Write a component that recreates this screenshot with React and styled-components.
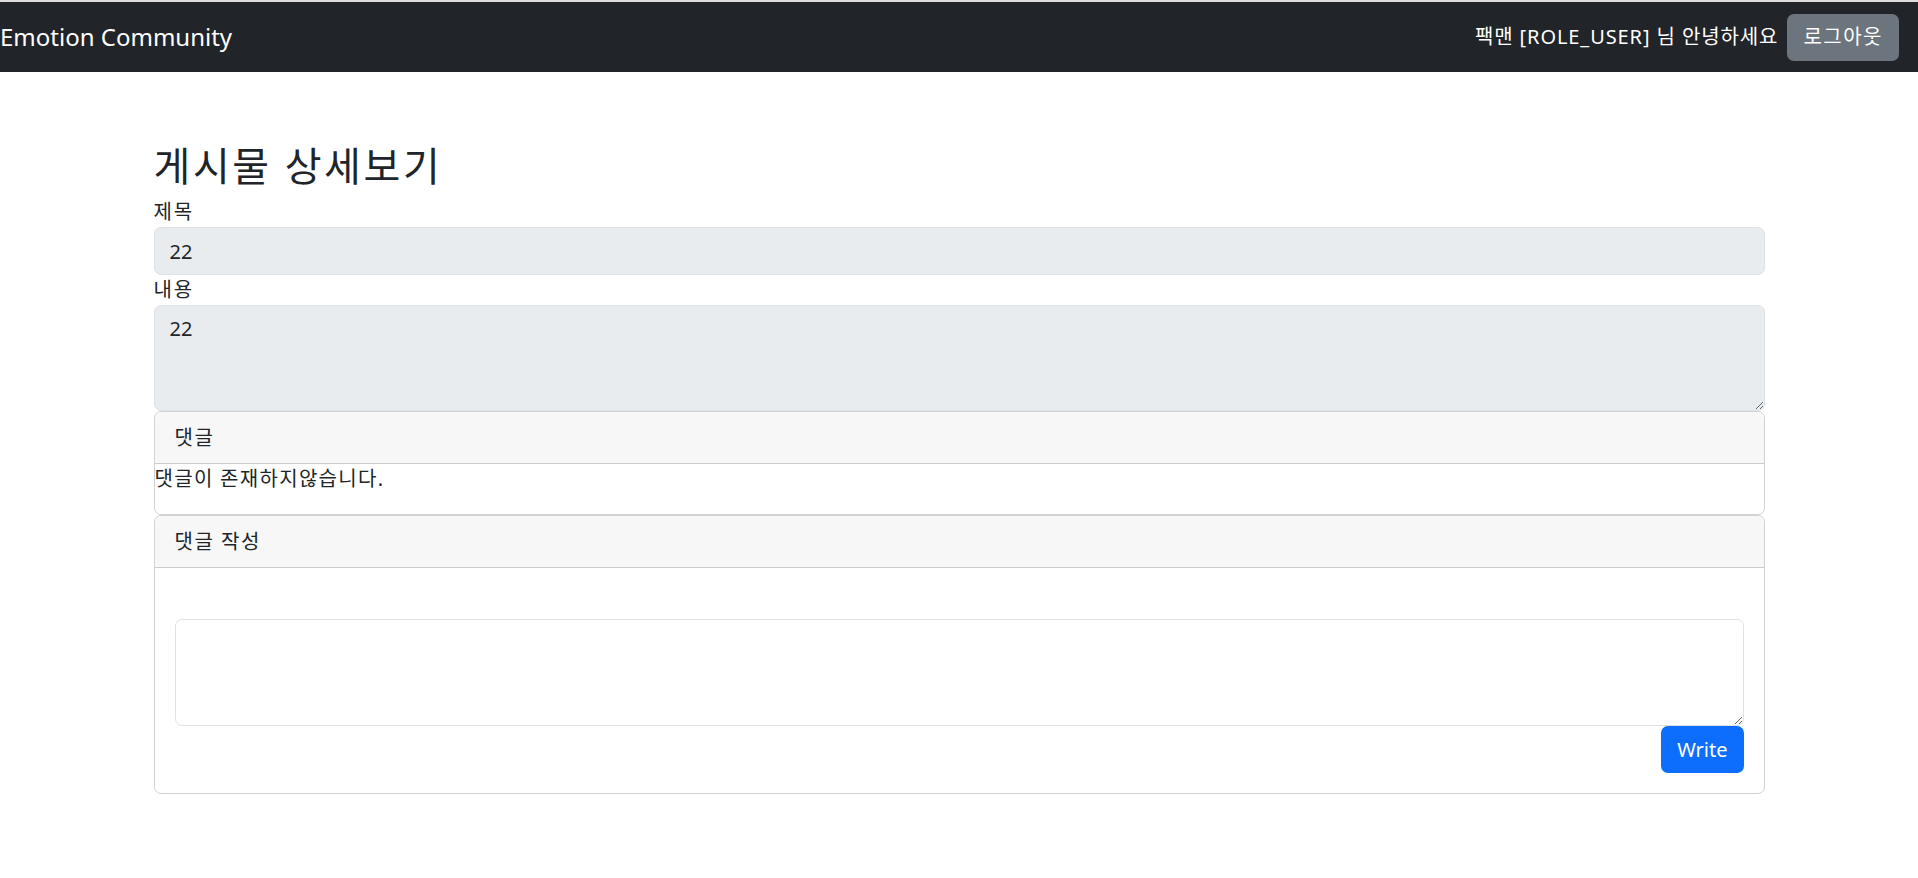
import React from "react";
import styled, { createGlobalStyle } from "styled-components";

const GlobalStyle = createGlobalStyle`
  body {
    margin: 0;
    border-top: 2px solid #dedede;
    font-family: "Noto Sans", "Noto Sans CJK KR", sans-serif;
    font-size: 20px;
    line-height: 1.5;
    color: #212529;
    background: #fff;
  }
  * {
    box-sizing: border-box;
  }
`;

const Navbar = styled.nav`
  height: 70px;
  background: #212529;
  display: flex;
  align-items: center;
  justify-content: space-between;
  padding-right: 19px;
`;

const Brand = styled.a`
  color: #fff;
  font-size: 24px;
  line-height: 30px;
  text-decoration: none;
`;

const UserArea = styled.div`
  display: flex;
  align-items: center;
  gap: 9px;
  color: #fff;
`;

const Greeting = styled.span`
  letter-spacing: 0.9px;
`;

const Button = styled.button`
  font-family: inherit;
  font-size: 20px;
  line-height: 30px;
  height: 47px;
  padding: 7px 15px;
  border: 1px solid transparent;
  border-radius: 7px;
  color: #fff;
  letter-spacing: ${(p) => (p.$variant === "primary" ? "0" : "1.5px")};
  background: ${(p) => (p.$variant === "primary" ? "#0d6efd" : "#6c757d")};
  cursor: pointer;
`;

const Container = styled.main`
  width: 1611px;
  margin: 0 auto;
  padding-top: 70px;
`;

const Title = styled.h2`
  margin: 0 0 7px;
  font-size: 40px;
  font-weight: 400;
  line-height: 48px;
  letter-spacing: 2.6px;
`;

const Label = styled.label`
  display: block;
  line-height: 30px;
  letter-spacing: 1.8px;
`;

const fieldBase = `
  display: block;
  width: 100%;
  font-family: inherit;
  font-size: 20px;
  line-height: 30px;
  color: #212529;
  padding: 8px 15px;
  border: 1px solid #dee2e6;
  border-radius: 7px;
  outline: none;
`;

const Input = styled.input`
  ${fieldBase}
  height: 48px;
  background: #e9ecef;
`;

const TextArea = styled.textarea`
  ${fieldBase}
  height: ${(p) => p.$height}px;
  background: ${(p) => (p.$readOnly ? "#e9ecef" : "#fff")};
  resize: vertical;
`;

const Card = styled.section`
  border: 1px solid rgba(0, 0, 0, 0.175);
  border-radius: 7px;
  overflow: hidden;
`;

const CardHeader = styled.div`
  padding: 10px 20px;
  line-height: 31px;
  letter-spacing: 1.5px;
  background: #f7f7f7;
  border-bottom: 1px solid rgba(0, 0, 0, 0.175);
`;

const EmptyText = styled.p`
  margin: 0 0 20px;
  line-height: 30px;
  letter-spacing: 1.3px;
`;

const CardBody = styled.div`
  padding: 20px;
  display: flex;
  flex-direction: column;
`;

const Spacer = styled.div`
  height: 31px;
`;

const Actions = styled.div`
  display: flex;
  justify-content: flex-end;
`;

export default function App() {
  return (
    <>
      <GlobalStyle />
      <Navbar>
        <Brand href="#">Emotion Community</Brand>
        <UserArea>
          <Greeting>팩맨 [ROLE_USER] 님 안녕하세요</Greeting>
          <Button>로그아웃</Button>
        </UserArea>
      </Navbar>
      <Container>
        <Title>게시물 상세보기</Title>
        <Label>제목</Label>
        <Input value="22" readOnly />
        <Label>내용</Label>
        <TextArea $height={106} $readOnly value="22" readOnly />
        <Card>
          <CardHeader>댓글</CardHeader>
          <EmptyText>댓글이 존재하지않습니다.</EmptyText>
        </Card>
        <Card>
          <CardHeader>댓글 작성</CardHeader>
          <CardBody>
            <Spacer />
            <TextArea $height={107} />
            <Actions>
              <Button $variant="primary">Write</Button>
            </Actions>
          </CardBody>
        </Card>
      </Container>
    </>
  );
}
